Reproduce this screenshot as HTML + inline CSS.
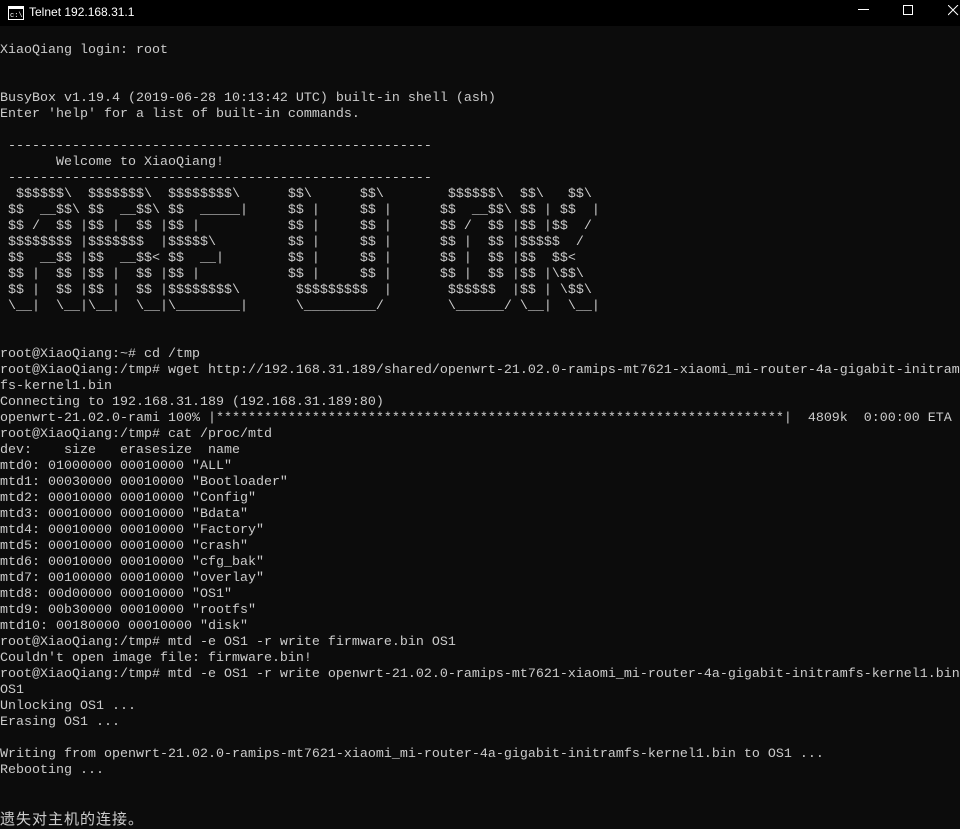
<!DOCTYPE html>
<html><head><meta charset="utf-8"><style>
html,body{margin:0;padding:0;width:960px;height:826px;overflow:hidden;background:#0c0c0c}
#tb{position:absolute;left:0;top:0;width:960px;height:26px;background:#000;color:#fff;font-family:"Liberation Sans",sans-serif;font-size:12px}
#tb .t{position:absolute;left:29px;top:5px}
#con{position:absolute;left:0;top:27px;width:960px;font-family:"Liberation Mono",monospace;font-size:13.33px;line-height:16px;color:#cccccc}
#con div{height:16px;white-space:pre}
.cjk{font-family:"Noto Sans CJK SC","WenQuanYi Zen Hei",sans-serif;font-size:15px;letter-spacing:1px}
</style></head><body>
<div id="tb">
<svg style="position:absolute;left:8px;top:6px" width="16" height="14" viewBox="0 0 16 14"><rect x="0.5" y="0.5" width="15" height="13" fill="#000" stroke="#fff"/><rect x="1" y="1" width="14" height="2" fill="#fff"/><text x="2" y="11" font-size="7" fill="#fff" font-family="Liberation Mono">c:\</text></svg>
<span class="t">Telnet 192.168.31.1</span>
<svg style="position:absolute;left:858px;top:9px" width="12" height="2"><rect width="11" height="1" fill="#fff"/></svg>
<svg style="position:absolute;left:903px;top:5px" width="11" height="11"><rect x="0.5" y="0.5" width="9" height="9" fill="none" stroke="#fff"/></svg>
<svg style="position:absolute;left:948px;top:5px" width="11" height="11"><path d="M0 0L10 10M10 0L0 10" stroke="#fff" stroke-width="1"/></svg>
</div>
<div id="con"><div></div><div>XiaoQiang login: root</div><div></div><div></div><div>BusyBox v1.19.4 (2019-06-28 10:13:42 UTC) built-in shell (ash)</div><div>Enter 'help' for a list of built-in commands.</div><div></div><div> -----------------------------------------------------</div><div>       Welcome to XiaoQiang!</div><div> -----------------------------------------------------</div><div>  $$$$$$\  $$$$$$$\  $$$$$$$$\      $$\      $$\        $$$$$$\  $$\   $$\</div><div> $$  __$$\ $$  __$$\ $$  _____|     $$ |     $$ |      $$  __$$\ $$ | $$  |</div><div> $$ /  $$ |$$ |  $$ |$$ |           $$ |     $$ |      $$ /  $$ |$$ |$$  /</div><div> $$$$$$$$ |$$$$$$$  |$$$$$\         $$ |     $$ |      $$ |  $$ |$$$$$  /</div><div> $$  __$$ |$$  __$$< $$  __|        $$ |     $$ |      $$ |  $$ |$$  $$<</div><div> $$ |  $$ |$$ |  $$ |$$ |           $$ |     $$ |      $$ |  $$ |$$ |\$$\</div><div> $$ |  $$ |$$ |  $$ |$$$$$$$$\       $$$$$$$$$  |       $$$$$$  |$$ | \$$\</div><div> \__|  \__|\__|  \__|\________|      \_________/        \______/ \__|  \__|</div><div></div><div></div><div>root@XiaoQiang:~# cd /tmp</div><div>root@XiaoQiang:/tmp# wget http://192.168.31.189/shared/openwrt-21.02.0-ramips-mt7621-xiaomi_mi-router-4a-gigabit-initram</div><div>fs-kernel1.bin</div><div>Connecting to 192.168.31.189 (192.168.31.189:80)</div><div>openwrt-21.02.0-rami 100% |***********************************************************************|  4809k  0:00:00 ETA</div><div>root@XiaoQiang:/tmp# cat /proc/mtd</div><div>dev:    size   erasesize  name</div><div>mtd0: 01000000 00010000 "ALL"</div><div>mtd1: 00030000 00010000 "Bootloader"</div><div>mtd2: 00010000 00010000 "Config"</div><div>mtd3: 00010000 00010000 "Bdata"</div><div>mtd4: 00010000 00010000 "Factory"</div><div>mtd5: 00010000 00010000 "crash"</div><div>mtd6: 00010000 00010000 "cfg_bak"</div><div>mtd7: 00100000 00010000 "overlay"</div><div>mtd8: 00d00000 00010000 "OS1"</div><div>mtd9: 00b30000 00010000 "rootfs"</div><div>mtd10: 00180000 00010000 "disk"</div><div>root@XiaoQiang:/tmp# mtd -e OS1 -r write firmware.bin OS1</div><div>Couldn't open image file: firmware.bin!</div><div>root@XiaoQiang:/tmp# mtd -e OS1 -r write openwrt-21.02.0-ramips-mt7621-xiaomi_mi-router-4a-gigabit-initramfs-kernel1.bin</div><div>OS1</div><div>Unlocking OS1 ...</div><div>Erasing OS1 ...</div><div></div><div>Writing from openwrt-21.02.0-ramips-mt7621-xiaomi_mi-router-4a-gigabit-initramfs-kernel1.bin to OS1 ...</div><div>Rebooting ...</div><div></div><div></div><div class="cjk">遗失对主机的连接。</div></div>
</body></html>
